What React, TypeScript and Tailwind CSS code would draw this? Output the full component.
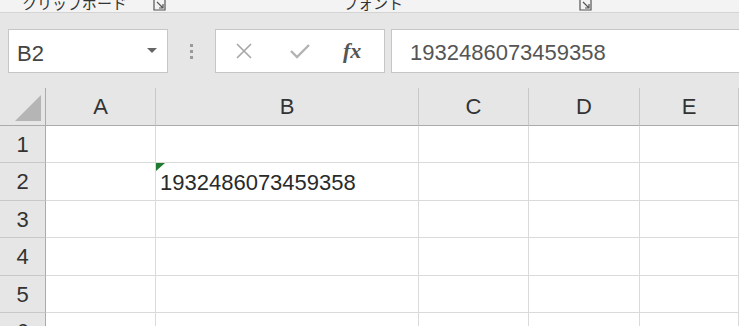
const cols = ["A", "B", "C", "D", "E"];
const rows = [
  { n: 1, h: "h-[37px]" },
  { n: 2, h: "h-[38px]" },
  { n: 3, h: "h-[37px]" },
  { n: 4, h: "h-[38px]" },
  { n: 5, h: "h-[37px]" },
  { n: 6, h: "h-[38px]" },
];

function Launcher() {
  return (
    <svg width="14" height="14" viewBox="0 0 14 14" className="shrink-0">
      <path d="M1 1 V12 H12 V1" fill="none" stroke="#555" strokeWidth="1.2" />
      <path d="M4 4 L10 10 M6 10 H10 V6" fill="none" stroke="#555" strokeWidth="1.2" />
    </svg>
  );
}

export default function App() {
  return (
    <div className="w-[739px] h-[326px] overflow-hidden bg-[#e6e6e6] font-['Liberation_Sans','Noto_Sans_CJK_JP',sans-serif]">
      {/* ribbon group labels, cut off at the top */}
      <div className="h-[13px] bg-[#f3f3f3] border-b border-[#d4d4d4] overflow-hidden relative">
        <div className="flex items-end h-[10px] text-[#333] text-[15px] leading-none">
          <span className="ml-[22px] -mt-[8px] font-['Noto_Sans_CJK_JP',sans-serif]">クリップボード</span>
          <span className="ml-[26px] -mb-[2px]"><Launcher /></span>
          <span className="ml-[176px] -mt-[8px] font-['Noto_Sans_CJK_JP',sans-serif]">フォント</span>
          <span className="ml-[176px] -mb-[2px]"><Launcher /></span>
        </div>
      </div>

      {/* formula bar */}
      <div className="h-[75px] flex items-start pt-[16px]">
        <div className="ml-[8px] w-[160px] h-[44px] bg-white border border-[#c6c6c6] flex items-center justify-between pl-[8px] pr-[10px]">
          <span className="text-[22px] text-[#444] mt-[4px]">B2</span>
          <svg width="10" height="6" viewBox="0 0 10 6">
            <path d="M0 0 H10 L5 5 Z" fill="#666" />
          </svg>
        </div>
        <div className="w-[47px] h-[44px] flex flex-col items-center justify-center gap-[3px]">
          <span className="w-[3px] h-[3px] bg-[#9a9a9a]" />
          <span className="w-[3px] h-[3px] bg-[#9a9a9a]" />
          <span className="w-[3px] h-[3px] bg-[#9a9a9a]" />
        </div>
        <div className="w-[170px] h-[44px] bg-white border border-[#c6c6c6] flex items-center">
          <svg width="18" height="18" viewBox="0 0 18 18" className="ml-[19px]">
            <path d="M2 2 L16 16 M16 2 L2 16" stroke="#a6a6a6" strokeWidth="1.6" />
          </svg>
          <svg width="22" height="16" viewBox="0 0 22 16" className="ml-[36px]">
            <path d="M2 8 L8 14 L20 2" fill="none" stroke="#b3b3b3" strokeWidth="2.4" />
          </svg>
          <span className="ml-[32px] font-['Liberation_Serif',serif] italic font-bold text-[22px] text-[#555] leading-none">
            fx
          </span>
        </div>
        <div className="ml-[6px] flex-1 h-[44px] bg-white border border-[#c6c6c6] border-r-0 flex items-center pl-[18px]">
          <span className="text-[22px] text-[#555] mt-[2px]">1932486073459358</span>
        </div>
      </div>

      {/* sheet */}
      <div className="grid grid-cols-[46px_110px_263px_110px_111px_1fr] bg-white">
        <div className="h-[38px] bg-[#e6e6e6] border-b border-r border-[#ababab] flex items-end justify-end pr-[4px] pb-[4px]">
          <svg width="26" height="26" viewBox="0 0 26 26">
            <path d="M26 0 V26 H0 Z" fill="#b5b5b5" />
          </svg>
        </div>
        {cols.map((c) => (
          <div
            key={c}
            className="h-[38px] bg-[#e6e6e6] border-b border-b-[#ababab] border-r border-r-[#c8c8c8] flex items-center justify-center text-[22px] text-[#333]"
          >
            {c}
          </div>
        ))}
        {rows.map((r) => (
          <div key={r.n} className="contents">
            <div
              className={`${r.h} bg-[#e6e6e6] border-r border-r-[#ababab] border-b border-b-[#c8c8c8] flex items-center justify-center text-[22px] text-[#333]`}
            >
              {r.n}
            </div>
            {cols.map((c) => (
              <div
                key={c}
                className={`${r.h} border-r border-b border-[#dadada] relative flex items-end`}
              >
                {r.n === 2 && c === "B" && (
                  <>
                    <svg width="9" height="8" viewBox="0 0 9 8" className="absolute left-0 top-0">
                      <path d="M0 0 H9 L0 8 Z" fill="#1e7a2e" />
                    </svg>
                    <span className="pl-[4px] pb-[6px] text-[22px] leading-none text-[#2a2a2a]">
                      1932486073459358
                    </span>
                  </>
                )}
              </div>
            ))}
          </div>
        ))}
      </div>
    </div>
  );
}
